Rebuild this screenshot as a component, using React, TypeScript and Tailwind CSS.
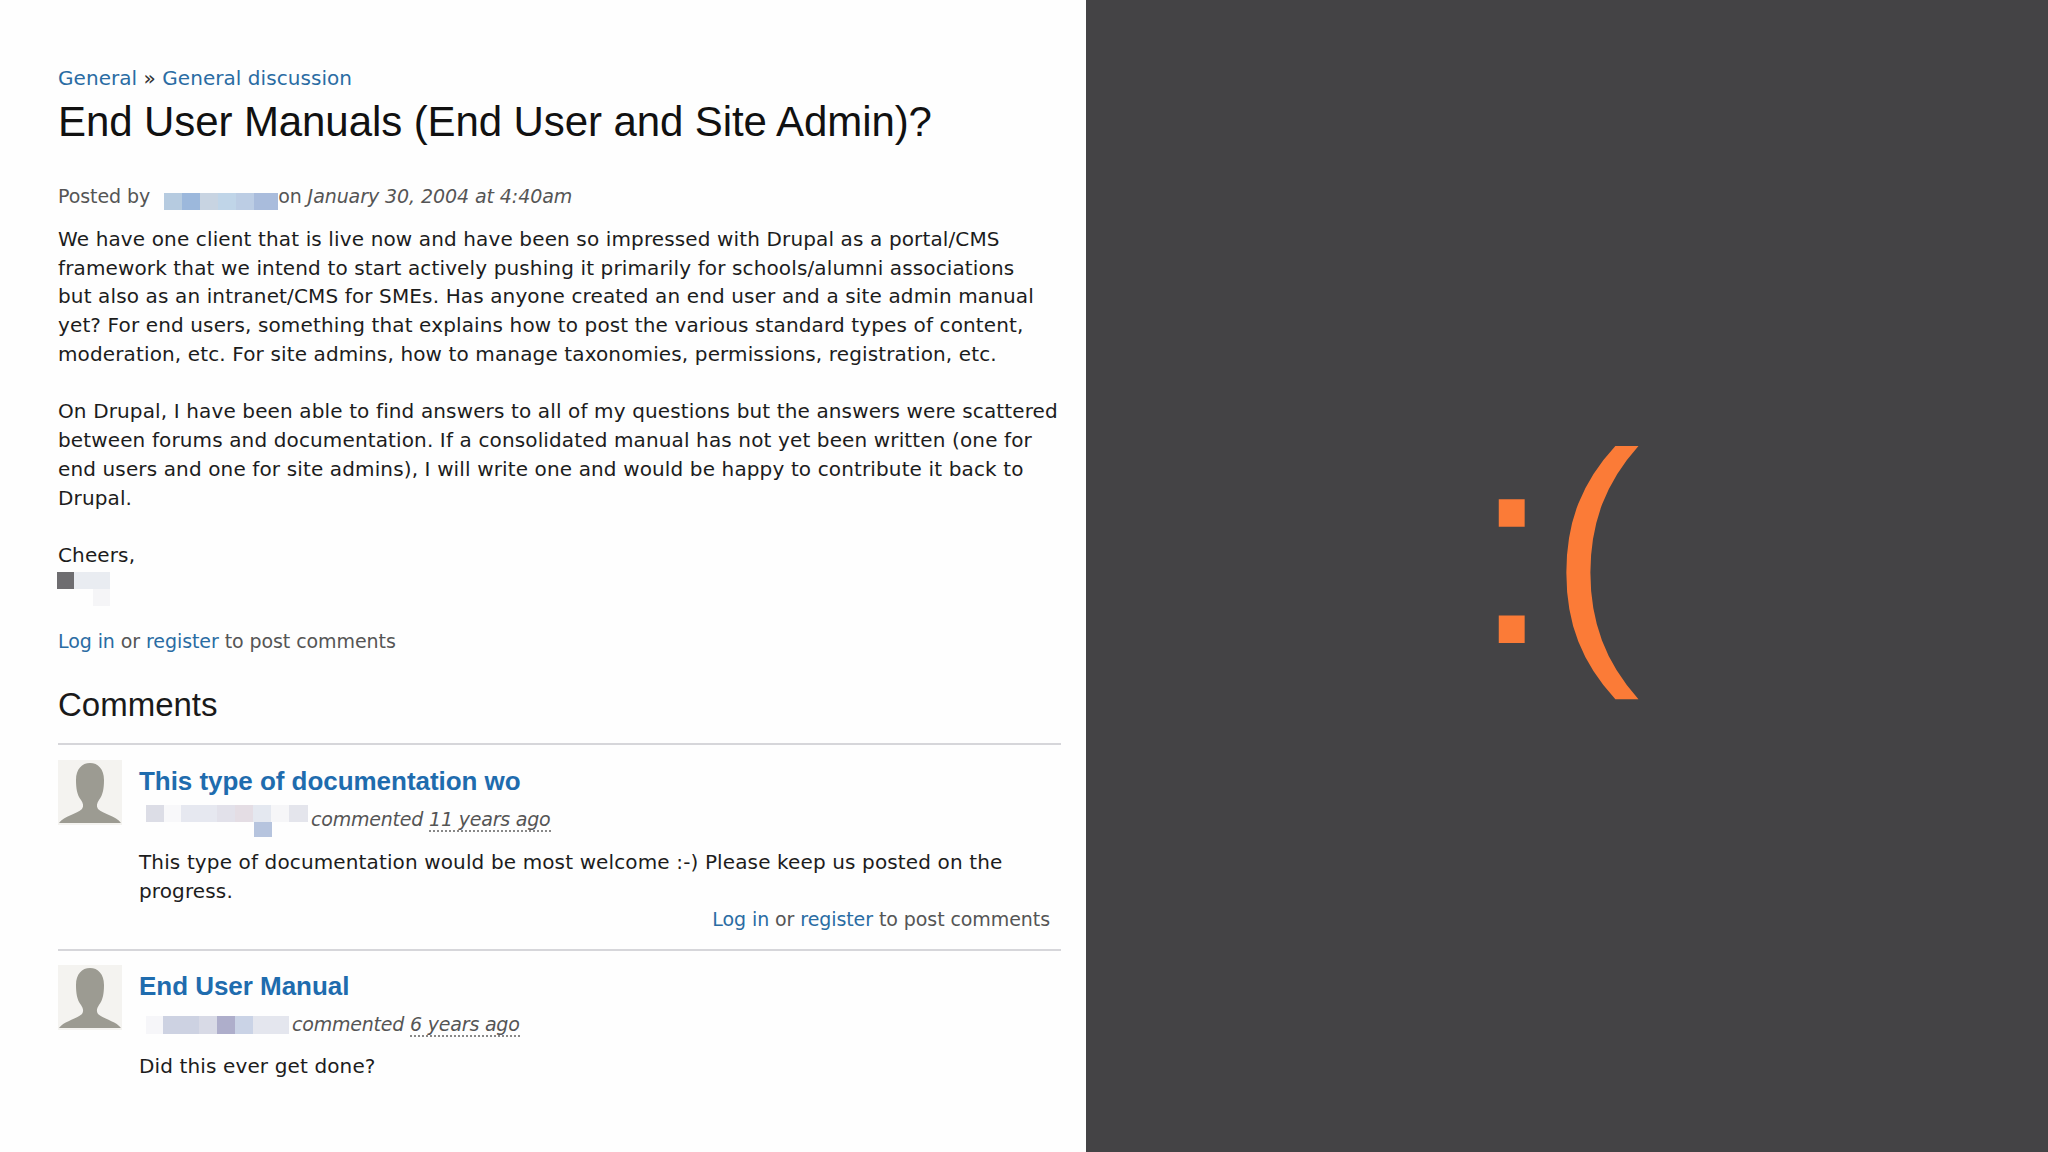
const body = "font-['DejaVu_Sans',sans-serif] text-[20px] leading-[28.73px] tracking-[0.13px] text-[#1c1c1c]";
const meta = "font-['DejaVu_Sans',sans-serif] text-[19px] leading-[29px] tracking-[-0.08px] text-[#555]";

function Avatar() {
  return (
    <div className="w-16 h-[65px] bg-[#f4f3f0] shrink-0">
      <svg viewBox="0 0 64 65" className="w-16 h-[65px]">
        <path d="M1 63 C6 56 19 54 24 49 C26 46 25 43 23 40 C19 35 18 28 18 20 C18 9 24 3 32 3 C40 3 46 9 46 20 C46 28 45 35 41 40 C39 43 38 46 40 49 C45 54 58 56 63 63 Z" fill="#9c9b92" />
      </svg>
    </div>
  );
}

function LoginLine({ className }: { className: string }) {
  return (
    <div className={`${meta} ${className}`}>
      <a className="text-[#2a6ca3]">Log in</a> or <a className="text-[#2a6ca3]">register</a> to post comments
    </div>
  );
}

function Comment({ title, byline, age, children }: { title: string; byline: React.ReactNode; age: string; children: React.ReactNode }) {
  return (
    <div className="flex gap-[17px]">
      <Avatar />
      <div className="flex-1">
        <h3 className="font-['Liberation_Sans',sans-serif] font-bold text-[26px] leading-[30px] mt-[6px] tracking-[-0.04px] text-[#1f6cae]">{title}</h3>
        <div className="flex h-[29px] mt-[9px] ml-[7px]">
          {byline}
          <span className="font-['DejaVu_Sans',sans-serif] text-[19px] leading-[29px] tracking-[-0.2px] text-[#555] italic ml-[3px]">
            commented <span className="border-b-2 border-dotted border-[#888]">{age}</span>
          </span>
        </div>
        {children}
      </div>
    </div>
  );
}

export default function App() {
  return (
    <div className="flex w-[2048px] h-[1152px] overflow-hidden">
      <div className="w-[1086px] shrink-0 bg-[#fefefe] pl-[58px] pr-[25px] pt-[64px]">
        <div className="font-['DejaVu_Sans',sans-serif] text-[20px] leading-[29px] tracking-[0.05px] text-[#333]">
          <a className="text-[#2a6ca3]">General</a> » <a className="text-[#2a6ca3]">General discussion</a>
        </div>
        <h1 className="font-['Liberation_Sans',sans-serif] text-[42px] leading-[50px] mt-[4px] tracking-[-0.09px] text-[#111]">End User Manuals (End User and Site Admin)?</h1>

        <div className={`${meta} flex mt-[35px]`}>
          <span>Posted by</span>
          <div className="flex h-[17px] mt-[11px] ml-[14px]">
            <div className="w-[18px] bg-[#b6cbe0]" />
            <div className="w-[18px] bg-[#9cb8dc]" />
            <div className="w-[18px] bg-[#c8d4e2]" />
            <div className="w-[18px] bg-[#c0d5e8]" />
            <div className="w-[18px] bg-[#bccde4]" />
            <div className="w-[24px] bg-[#a9bcdc]" />
          </div>
          <span>on <i>January 30, 2004 at 4:40am</i></span>
        </div>

        <p className={`${body} mt-[14px]`}>
          We have one client that is live now and have been so impressed with Drupal as a portal/CMS<br />
          framework that we intend to start actively pushing it primarily for schools/alumni associations<br />
          but also as an intranet/CMS for SMEs. Has anyone created an end user and a site admin manual<br />
          yet? For end users, something that explains how to post the various standard types of content,<br />
          moderation, etc. For site admins, how to manage taxonomies, permissions, registration, etc.
        </p>
        <p className={`${body} mt-[28.73px]`}>
          On Drupal, I have been able to find answers to all of my questions but the answers were scattered<br />
          between forums and documentation. If a consolidated manual has not yet been written (one for<br />
          end users and one for site admins), I will write one and would be happy to contribute it back to<br />
          Drupal.
        </p>
        <p className={`${body} mt-[28.73px]`}>Cheers,</p>
        <div className="flex h-[17px] mt-[2px] -ml-px">
          <div className="w-[17px] bg-[#6e6d70]" />
          <div className="w-[36px] bg-[#e9ecf1]" />
        </div>
        <div className="w-[17px] h-[17px] ml-[35px] bg-[#f5f5f7]" />

        <LoginLine className="mt-[21px]" />

        <h2 className="font-['Liberation_Sans',sans-serif] text-[33px] leading-[40px] mt-[29px] text-[#1a1a1a]">Comments</h2>

        <div className="border-t-2 border-[#d6d6da] mt-[18px] pt-[15px] h-[206px]">
          <Comment
            title="This type of documentation wo"
            age="11 years ago"
            byline={
              <div className="flex w-[162px] h-[17px] relative shrink-0">
                <div className="w-[18px] bg-[#dcdde6]" />
                <div className="w-[17px] bg-[#f8f8fa]" />
                <div className="w-[36px] bg-[#e6e8f0]" />
                <div className="w-[18px] bg-[#e2e1ea]" />
                <div className="w-[18px] bg-[#e4dde4]" />
                <div className="w-[18px] bg-[#e4e8f0]" />
                <div className="w-[18px] bg-[#f6f6f8]" />
                <div className="w-[19px] bg-[#e4e5ec]" />
                <div className="absolute left-[108px] top-[17px] w-[18px] h-[15px] bg-[#b6c4de]" />
              </div>
            }
          >
            <p className={`${body} mt-[14px]`}>
              This type of documentation would be most welcome :-) Please keep us posted on the<br />
              progress.
            </p>
            <LoginLine className="text-right pr-[11px]" />
          </Comment>
        </div>

        <div className="border-t-2 border-[#d6d6da] pt-[14px]">
          <Comment
            title="End User Manual"
            age="6 years ago"
            byline={
              <div className="flex h-[18px] mt-[6px] shrink-0">
                <div className="w-[17px] bg-[#f6f6f9]" />
                <div className="w-[36px] bg-[#cdd2e2]" />
                <div className="w-[18px] bg-[#d8dae6]" />
                <div className="w-[18px] bg-[#aeaecb]" />
                <div className="w-[18px] bg-[#cad3e6]" />
                <div className="w-[36px] bg-[#e4e6ee]" />
              </div>
            }
          >
            <p className={`${body} mt-[13px]`}>Did this ever get done?</p>
          </Comment>
        </div>
      </div>

      <div className="flex-1 bg-[#444345] flex items-center justify-center pr-[20px] pb-[54px]">
        <span className="font-['Liberation_Sans',sans-serif] text-[272px] leading-none text-[#fb7b37]">:(</span>
      </div>
    </div>
  );
}
